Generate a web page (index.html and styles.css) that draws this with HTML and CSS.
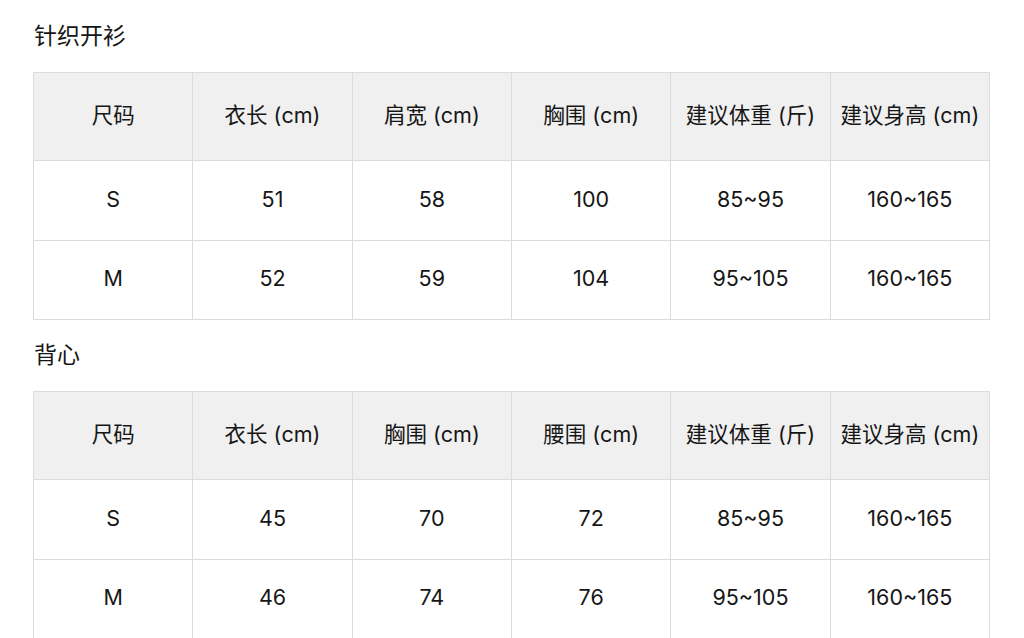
FILE: index.html
```html
<!DOCTYPE html>
<html lang="zh">
<head>
<meta charset="utf-8">
<link rel="stylesheet" href="styles.css">
</head>
<body>
<div class="page">
  <h2 class="title">针织开衫</h2>
  <table class="size">
    <thead>
      <tr><th>尺码</th><th>衣长 (cm)</th><th>肩宽 (cm)</th><th>胸围 (cm)</th><th>建议体重 (斤)</th><th>建议身高 (cm)</th></tr>
    </thead>
    <tbody>
      <tr><td>S</td><td>51</td><td>58</td><td>100</td><td>85~95</td><td>160~165</td></tr>
      <tr><td>M</td><td>52</td><td>59</td><td>104</td><td>95~105</td><td>160~165</td></tr>
    </tbody>
  </table>
  <h2 class="title">背心</h2>
  <table class="size">
    <thead>
      <tr><th>尺码</th><th>衣长 (cm)</th><th>胸围 (cm)</th><th>腰围 (cm)</th><th>建议体重 (斤)</th><th>建议身高 (cm)</th></tr>
    </thead>
    <tbody>
      <tr><td>S</td><td>45</td><td>70</td><td>72</td><td>85~95</td><td>160~165</td></tr>
      <tr><td>M</td><td>46</td><td>74</td><td>76</td><td>95~105</td><td>160~165</td></tr>
    </tbody>
  </table>
</div>
</body>
</html>
```

FILE: styles.css
```css
html, body {
  margin: 0;
  padding: 0;
  background: #fff;
}
body {
  font-family: Inter, "Noto Sans CJK SC", sans-serif;
  color: #161616;
}
.page {
  padding: 0 34px 0 33px;
}
.title {
  margin: 0;
  height: 72px;
  line-height: 72px;
  font-size: 23px;
  font-weight: normal;
  padding-left: 1px;
}
.size + .title {
  height: 71px;
  line-height: 71px;
}
.size {
  width: 957px;
  border-collapse: collapse;
  table-layout: fixed;
  font-size: 21.5px;
  line-height: 1;
}
.size th, .size td {
  border: 1px solid #dcdcdc;
  text-align: center;
  padding: 0;
  font-weight: normal;
}
.size th {
  background: #f0f0f0;
  height: 85px;
  padding-bottom: 2px;
}
.size td {
  height: 77px;
  padding-bottom: 2px;
}
.size tr:last-child td {
  height: 76px;
}
```
